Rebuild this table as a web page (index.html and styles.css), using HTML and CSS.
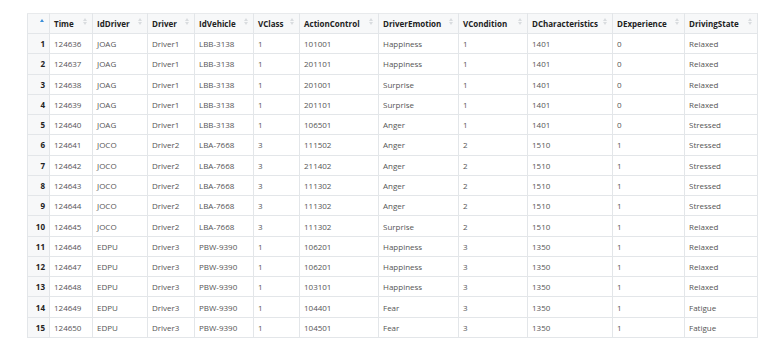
FILE: index.html
```html
<!DOCTYPE html>
<html>
<head>
    <title>DriverState</title>
    <link rel="stylesheet" href="styles.css">
</head>
<body>
    <table class="grid">
        <thead>
            <tr>
                <th class="rn sorted"></th>
                <th class="c1">Time</th>
                <th class="c2">IdDriver</th>
                <th class="c3">Driver</th>
                <th class="c4">IdVehicle</th>
                <th class="c5">VClass</th>
                <th class="c6">ActionControl</th>
                <th class="c7">DriverEmotion</th>
                <th class="c8">VCondition</th>
                <th class="c9">DCharacteristics</th>
                <th class="c10">DExperience</th>
                <th class="c11">DrivingState</th>
            </tr>
        </thead>
        <tbody id="rows"></tbody>
    </table>

    <script>
        // datos de la tabla
        const data = [
            [124636, 'JOAG', 'Driver1', 'LBB-3138', 1, 101001, 'Happiness', 1, 1401, 0, 'Relaxed'],
            [124637, 'JOAG', 'Driver1', 'LBB-3138', 1, 201101, 'Happiness', 1, 1401, 0, 'Relaxed'],
            [124638, 'JOAG', 'Driver1', 'LBB-3138', 1, 201001, 'Surprise', 1, 1401, 0, 'Relaxed'],
            [124639, 'JOAG', 'Driver1', 'LBB-3138', 1, 201101, 'Surprise', 1, 1401, 0, 'Relaxed'],
            [124640, 'JOAG', 'Driver1', 'LBB-3138', 1, 106501, 'Anger', 1, 1401, 0, 'Stressed'],
            [124641, 'JOCO', 'Driver2', 'LBA-7668', 3, 111502, 'Anger', 2, 1510, 1, 'Stressed'],
            [124642, 'JOCO', 'Driver2', 'LBA-7668', 3, 211402, 'Anger', 2, 1510, 1, 'Stressed'],
            [124643, 'JOCO', 'Driver2', 'LBA-7668', 3, 111302, 'Anger', 2, 1510, 1, 'Stressed'],
            [124644, 'JOCO', 'Driver2', 'LBA-7668', 3, 111302, 'Anger', 2, 1510, 1, 'Stressed'],
            [124645, 'JOCO', 'Driver2', 'LBA-7668', 3, 111302, 'Surprise', 2, 1510, 1, 'Relaxed'],
            [124646, 'EDPU', 'Driver3', 'PBW-9390', 1, 106201, 'Happiness', 3, 1350, 1, 'Relaxed'],
            [124647, 'EDPU', 'Driver3', 'PBW-9390', 1, 106201, 'Happiness', 3, 1350, 1, 'Relaxed'],
            [124648, 'EDPU', 'Driver3', 'PBW-9390', 1, 103101, 'Happiness', 3, 1350, 1, 'Relaxed'],
            [124649, 'EDPU', 'Driver3', 'PBW-9390', 1, 104401, 'Fear', 3, 1350, 1, 'Fatigue'],
            [124650, 'EDPU', 'Driver3', 'PBW-9390', 1, 104501, 'Fear', 3, 1350, 1, 'Fatigue']
        ];

        const body = document.getElementById('rows');
        data.forEach((row, i) => {
            const tr = document.createElement('tr');
            tr.innerHTML = `<td class="rn">${i + 1}</td>` +
                row.map(v => `<td>${v}</td>`).join('');
            body.appendChild(tr);
        });
    </script>
</body>
</html>
```

FILE: styles.css
```css
body {
    font-family: 'Open Sans', 'Noto Sans', sans-serif;
    background: #ffffff;
    margin: 0;
    padding: 13px 0 0 27px;
    color: #444;
}
.grid {
    border-collapse: collapse;
    table-layout: fixed;
    width: 730px;
    font-size: 8px;
}
.grid th,
.grid td {
    border: 1px solid #e3e6e9;
    text-align: left;
    white-space: nowrap;
    overflow: hidden;
    padding: 0 4px;
}
.grid th {
    position: relative;
    height: 19px;
    background: #f7f8f9;
    color: #222;
    font-weight: 700;
}
.grid td {
    height: 19.27px;
    color: #555;
}
.grid td.rn {
    background: #f7f8f9;
    color: #222;
    font-weight: 700;
    text-align: right;
}
.grid tr:first-child th {
    border-top-color: #e8eaec;
}
/* flechas de orden */
.grid th::before,
.grid th::after {
    content: '';
    position: absolute;
    right: 5px;
    border-left: 2.5px solid transparent;
    border-right: 2.5px solid transparent;
}
.grid th::before {
    top: 4px;
    border-bottom: 3px solid #d9dcdf;
}
.grid th::after {
    top: 8px;
    border-top: 3px solid #d9dcdf;
}
.grid th.sorted::before {
    top: 5px;
    border-bottom-color: #3b8fd9;
}
.grid th.sorted::after {
    display: none;
}
.rn { width: 13px; }
.c1 { width: 34px; }
.c2 { width: 46px; }
.c3 { width: 38px; }
.c4 { width: 50px; }
.c5 { width: 37px; }
.c6 { width: 70px; }
.c7 { width: 71px; }
.c8 { width: 60px; }
.c9 { width: 76px; }
.c10 { width: 63px; }
.c11 { width: 64px; }
```
